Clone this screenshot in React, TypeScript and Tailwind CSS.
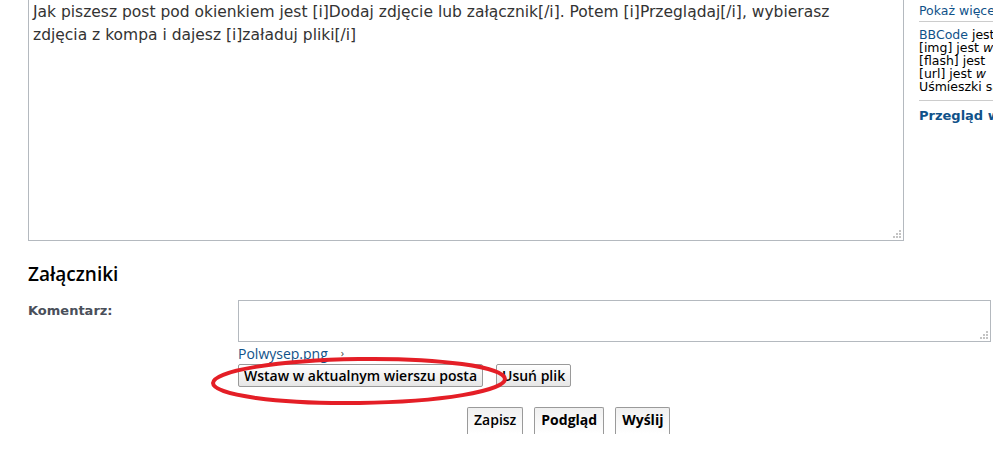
import React from "react";

const verdana = { fontFamily: '"DejaVu Sans", Verdana, sans-serif' };
const openSans = { fontFamily: '"Open Sans", sans-serif' };

function Grip() {
  return (
    <svg width="10" height="10" viewBox="0 0 10 10" className="absolute bottom-[1px] right-[1px]">
      <rect x="7" y="1" width="2" height="2" fill="#c4c4c4" />
      <rect x="4" y="4" width="2" height="2" fill="#c4c4c4" />
      <rect x="7" y="4" width="2" height="2" fill="#c4c4c4" />
      <rect x="1" y="7" width="2" height="2" fill="#c4c4c4" />
      <rect x="4" y="7" width="2" height="2" fill="#c4c4c4" />
      <rect x="7" y="7" width="2" height="2" fill="#c4c4c4" />
    </svg>
  );
}

function Button({ children }: { children: React.ReactNode }) {
  return (
    <button
      className="h-[23px] rounded-[2px] border border-[#9a9a9a] bg-gradient-to-b from-[#ffffff] to-[#e6e6e6] px-[5px] text-[14px] font-semibold leading-[20px] text-black"
      style={openSans}
    >
      {children}
    </button>
  );
}

function BottomButton({ children, bold }: { children: React.ReactNode; bold?: boolean }) {
  return (
    <button
      className={`h-[27px] rounded-t-[2px] border border-b-0 border-[#9a9a9a] bg-gradient-to-b from-[#f0f0f0] to-[#ffffff] px-[6px] pb-[2px] text-[14px] leading-[24px] text-black ${bold ? "font-bold" : "font-semibold"}`}
      style={openSans}
    >
      {children}
    </button>
  );
}

export default function App() {
  return (
    <div className="relative h-[460px] w-[993px] overflow-hidden bg-white">
      <div className="flex">
        <div
          className="relative ml-[28px] h-[241px] w-[876px] shrink-0 border-x border-b border-[#b4b9bf] px-[4px] pt-[1px] text-[15.5px] leading-[23px] text-[#333333]"
          style={verdana}
        >
          Jak piszesz post pod okienkiem jest [i]Dodaj zdjęcie lub załącznik[/i]. Potem [i]Przeglądaj[/i], wybierasz
          <br />
          zdjęcia z kompa i dajesz [i]załaduj pliki[/i]
          <Grip />
        </div>
        <div className="ml-[15px] w-[74px] shrink-0 overflow-hidden whitespace-nowrap text-[12.5px] leading-[13px] text-black" style={verdana}>
          <div className="pt-[4px] text-[#105289]">Pokaż więcej</div>
          <div className="mt-[4px] h-px w-[200px] bg-[#cccccc]" />
          <div className="mt-[6px]">
            <span className="text-[#105289]">BBCode</span> jest
          </div>
          <div>[img] jest <em>w</em></div>
          <div>[flash] jest</div>
          <div>[url] jest <em>w</em></div>
          <div>Uśmieszki są</div>
          <div className="mt-[7px] h-px w-[200px] bg-[#cccccc]" />
          <div className="mt-[7px] text-[13px] font-bold leading-[16px] text-[#105289]">Przegląd wą</div>
        </div>
      </div>

      <h3 className="ml-[28px] mt-[21px] text-[19px] font-semibold leading-[24px] text-black" style={openSans}>
        Załączniki
      </h3>

      <div className="mt-[14px] flex">
        <div className="ml-[28px] w-[210px] pt-[3px] text-[13px] font-bold leading-[15px] text-[#4a4f5a]" style={verdana}>
          Komentarz:
        </div>
        <div>
          <div className="relative h-[42px] w-[753px] border border-[#b4b9bf] bg-white">
            <Grip />
          </div>
          <div className="mt-[1px] flex h-[21px] items-center text-[14px] text-[#105289]" style={openSans}>
            <span>Polwysep.png</span>
            <span className="ml-[13px] text-[11px] text-[#444]">›</span>
          </div>
          <div className="flex gap-[13px]">
            <Button>Wstaw w aktualnym wierszu posta</Button>
            <Button>Usuń plik</Button>
          </div>
        </div>
      </div>

      <div className="mt-[20px] flex gap-[11px] pl-[467px]">
        <BottomButton>Zapisz</BottomButton>
        <BottomButton bold>Podgląd</BottomButton>
        <BottomButton bold>Wyślij</BottomButton>
      </div>

      <svg className="pointer-events-none absolute left-[205px] top-[352px]" width="310" height="60" viewBox="0 0 310 60">
        <ellipse cx="154" cy="29" rx="146" ry="22" fill="none" stroke="#e41e26" strokeWidth="4" transform="rotate(-0.8 154 29)" />
      </svg>
    </div>
  );
}
